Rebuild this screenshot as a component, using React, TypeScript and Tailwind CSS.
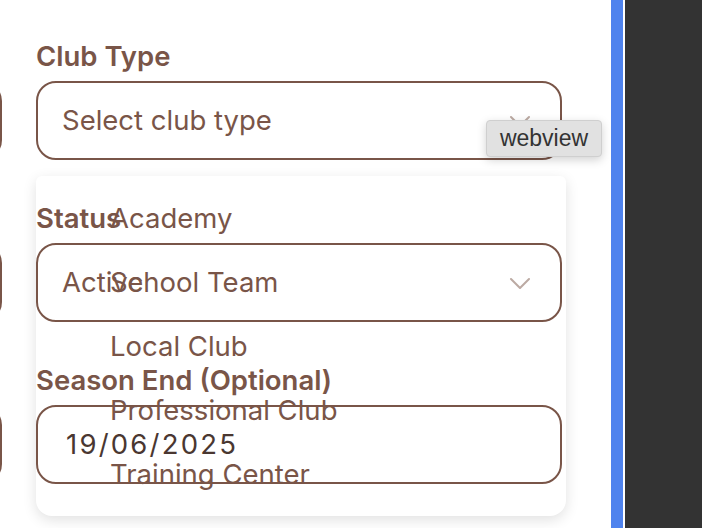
import React from 'react';

const clubTypes = ['Academy', 'School Team', 'Local Club', 'Professional Club', 'Training Center'];

function Chevron() {
  return (
    <svg className="mr-[29px] text-[#795548]/50" width="22" height="12" viewBox="0 0 22 12" fill="none" stroke="currentColor" strokeWidth="2" strokeLinecap="round" strokeLinejoin="round">
      <path d="M2 2l9 9 9-9" />
    </svg>
  );
}

function Field({ label, children }: { label?: string; children: React.ReactNode }) {
  return (
    <div className="mb-[43px]">
      <div className="mb-2 h-8 text-[27.5px] font-semibold leading-[30px] text-[#795548]">{label}</div>
      {children}
    </div>
  );
}

function Box({ children }: { children?: React.ReactNode }) {
  return (
    <div className="flex h-[79px] items-center rounded-[20px] border-2 border-[#795548] bg-transparent">
      {children}
    </div>
  );
}

export default function App() {
  return (
    <div className="flex h-[528px] w-[702px] overflow-hidden bg-white" style={{ fontFamily: 'Inter, "Noto Sans", sans-serif' }}>
      <div className="relative flex w-[611px] overflow-hidden pt-[41px]">
        {/* left column, scrolled mostly out of view */}
        <div className="-ml-[298px] w-[300px] shrink-0">
          <Field><Box /></Field>
          <Field><Box /></Field>
          <Field><Box /></Field>
        </div>

        <div className="relative ml-[34px] w-[526px] shrink-0">
          {/* open dropdown panel */}
          <div className="absolute left-0 top-[135px] h-[340px] w-[530px] rounded-b-2xl rounded-t-md bg-white pt-[11px] shadow-[0_4px_14px_rgba(0,0,0,0.12)]">
            {clubTypes.map(t => (
              <div key={t} className="flex h-16 items-center pl-[74px] text-[27.5px] text-[#795548]">{t}</div>
            ))}
          </div>

          <div className="relative">
            <Field label="Club Type">
              <Box>
                <span className="flex-1 pl-6 text-[27.5px] text-[#795548]">Select club type</span>
                <Chevron />
              </Box>
            </Field>
            <Field label="Status">
              <Box>
                <span className="flex-1 pl-6 text-[27.5px] text-[#795548]">Active</span>
                <Chevron />
              </Box>
            </Field>
            <Field label="Season End (Optional)">
              <Box>
                <span className="flex-1 pl-7 text-[27.5px] tracking-[2.2px] text-[#4a3731]">19/06/2025</span>
              </Box>
            </Field>
          </div>

          {/* hover tooltip */}
          <div className="absolute left-[450px] top-[79px] flex h-[37px] w-[116px] items-center justify-center rounded border border-[#cfcfcf] bg-[#e1e1e1] text-[23px] text-[#333] shadow-[0_3px_10px_rgba(0,0,0,0.18)]" style={{ fontFamily: '"Liberation Sans", Arial, sans-serif' }}>
            webview
          </div>
        </div>
      </div>
      <div className="w-3 shrink-0 bg-[#4f83ee]" />
      <div className="w-[2px] shrink-0 bg-white" />
      <div className="flex-1 bg-[#333333]" />
    </div>
  );
}
